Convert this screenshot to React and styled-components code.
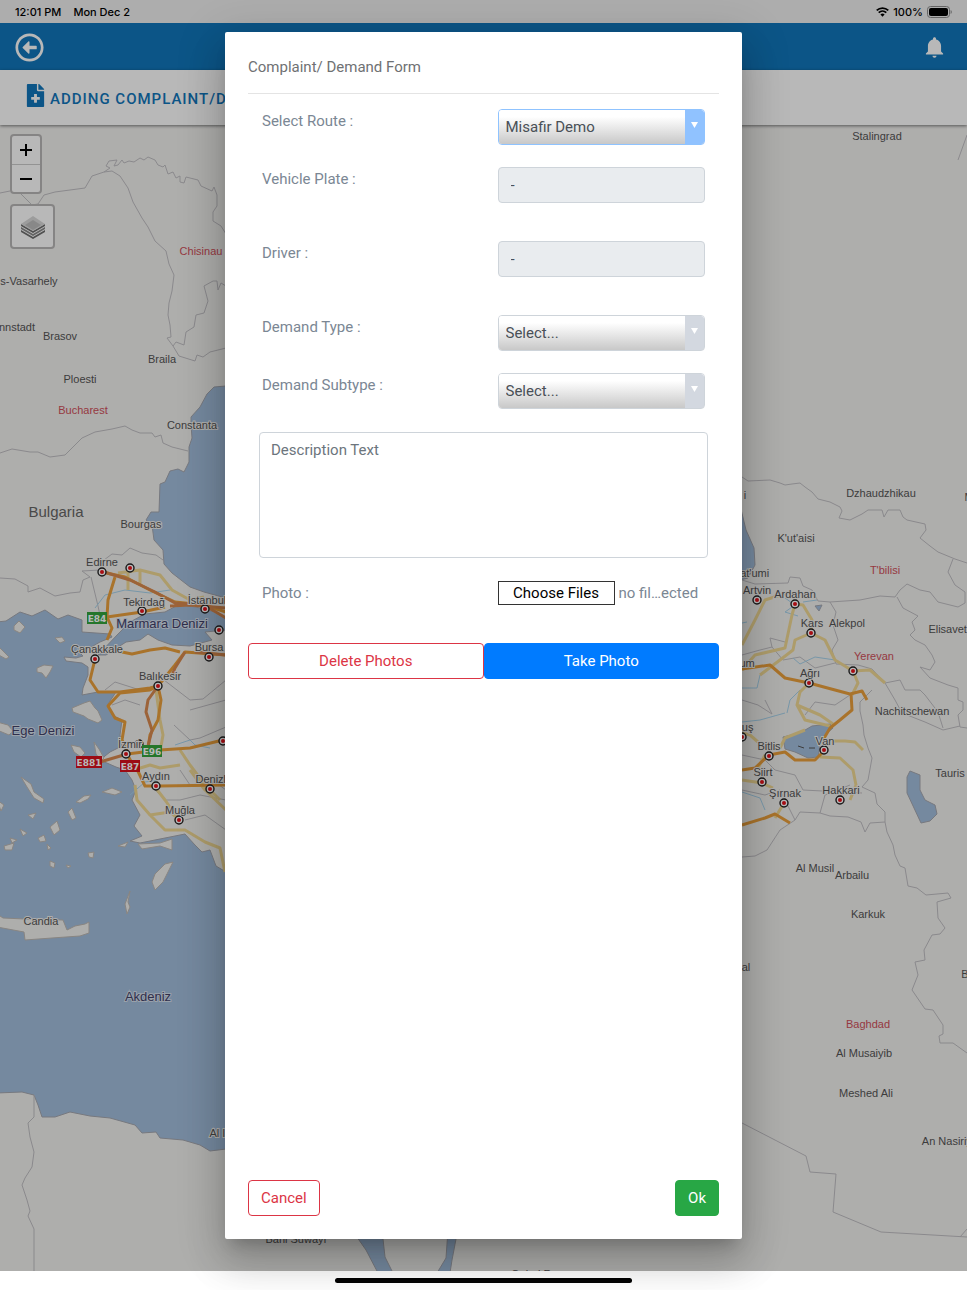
import React, { useState } from "react";
import styled, { createGlobalStyle } from "styled-components";
import { FaRegArrowAltCircleLeft, FaFileMedical } from "react-icons/fa";
import { IoMdNotifications } from "react-icons/io";

const GlobalStyle = createGlobalStyle`
  * {
    box-sizing: border-box;
  }
  body {
    margin: 0;
    background: #ffffff;
    font-family: Roboto, "Liberation Sans", sans-serif;
    font-size: 15px;
    line-height: 22px;
  }
  button, select, input, textarea {
    font: inherit;
  }
`;

const Screen = styled.div`
  min-height: 100vh;
  display: flex;
  flex-direction: column;
`;

const Viewport = styled.div`
  position: relative;
  flex: 1;
  display: flex;
  flex-direction: column;
`;

const StatusBar = styled.div`
  height: 23px;
  padding: 0 15px;
  display: flex;
  align-items: center;
  justify-content: space-between;
  background: #f0f0f0;
  color: #000000;
  font-family: Inter, sans-serif;
  font-size: 11px;
  font-weight: 500;
`;

const StatusGroup = styled.div`
  display: flex;
  align-items: center;
  gap: ${(props) => props.gap || "4px"};
`;

const Header = styled.header`
  height: 47px;
  padding: 2px 20px 0 15px;
  display: flex;
  align-items: center;
  justify-content: space-between;
  background: #1176bb;
`;

const IconButton = styled.button`
  display: flex;
  padding: 0;
  border: 0;
  background: none;
  color: #ffffff;
  font-size: ${(props) => props.size};
`;

const TitleBar = styled.div`
  position: relative;
  height: 55px;
  padding: 14px 24px;
  display: flex;
  gap: 3px;
  background: #ffffff;
  color: #1176bb;
  box-shadow: 0 1px 3px rgba(0, 0, 0, 0.5);
  font-size: 23px;
  z-index: 1;
`;

const Title = styled.h1`
  margin: 4px 0 0;
  font-size: 15px;
  font-weight: 500;
  line-height: 22px;
  letter-spacing: 1px;
  white-space: nowrap;
`;

const MapArea = styled.div`
  position: relative;
  flex: 1;
  overflow: hidden;
  background: #f2f1ef;
`;

const MapCanvas = styled.svg`
  position: absolute;
  inset: 0;
  width: 100%;
  height: 100%;
  font-family: "Liberation Sans", Arial, sans-serif;
`;

const MapControls = styled.div`
  position: absolute;
  top: 9px;
  left: 10px;
  display: flex;
  flex-direction: column;
  align-items: flex-start;
  gap: 10px;
`;

const ControlGroup = styled.div`
  display: flex;
  flex-direction: column;
  border: 2px solid #b9b8b7;
  border-radius: 4px;
  background: #ffffff;
`;

const ControlButton = styled.button`
  width: ${(props) => props.size}px;
  height: ${(props) => props.size}px;
  padding: 0;
  display: flex;
  align-items: center;
  justify-content: center;
  border: 0;
  background: none;
  color: #000000;

  & + & {
    border-top: 1px solid #cccccc;
  }
`;

const Backdrop = styled.div`
  position: absolute;
  inset: 0;
  z-index: 2;
  display: flex;
  justify-content: center;
  padding: 32px 0;
  background: rgba(0, 0, 0, 0.28);
`;

const Dialog = styled.form`
  width: 100%;
  max-width: 517px;
  padding: 23px;
  display: flex;
  flex-direction: column;
  border-radius: 2px;
  background: #ffffff;
  box-shadow: 0 11px 15px -7px rgba(0, 0, 0, 0.2),
    0 24px 38px 3px rgba(0, 0, 0, 0.14), 0 9px 46px 8px rgba(0, 0, 0, 0.12);
`;

const DialogTitle = styled.h2`
  margin: 0 0 15px;
  padding: 1px 0 15px;
  border-bottom: 1px solid #e4e4e4;
  color: #6f7173;
  font-size: 15px;
  font-weight: 400;
`;

const Row = styled.div`
  display: grid;
  grid-template-columns: 1fr 1fr;
  gap: 28px;
  padding: 0 14px;
  margin-bottom: ${(props) => (props.wide ? "38px" : "22px")};
`;

const Label = styled.label`
  padding-top: 1px;
  color: #7b8794;
`;

const SelectBox = styled.div`
  position: relative;
  height: 36px;
  overflow: hidden;
  border: 1px solid ${(props) => (props.active ? "#8fc3ff" : "#ced4da")};
  border-radius: 4px;
`;

const Select = styled.select`
  appearance: none;
  width: 100%;
  height: 34px;
  padding: 0 26px 0 7px;
  border: 0;
  outline: 0;
  background: linear-gradient(#ffffff 20%, #c8c8c8);
  color: #495057;
`;

const Arrow = styled.span`
  position: absolute;
  top: 0;
  right: 0;
  width: 19px;
  height: 34px;
  display: flex;
  justify-content: center;
  padding-top: 12px;
  background: ${(props) => (props.active ? "#90c2ff" : "#d3d8e0")};
  pointer-events: none;
`;

const ReadOnlyInput = styled.input`
  width: 100%;
  height: 36px;
  padding: 0 12px;
  border: 1px solid #ced4da;
  border-radius: 4px;
  background: #e9ecef;
  color: #495057;
`;

const Description = styled.textarea`
  display: block;
  height: 126px;
  margin: 1px 11px 23px;
  padding: 6px 11px;
  border: 1px solid #ced4da;
  border-radius: 4px;
  resize: none;

  &::placeholder {
    color: #6c757d;
    opacity: 1;
  }
`;

const FileField = styled.div`
  display: flex;
  align-items: center;
  gap: 4px;
  color: #7b8794;
  white-space: nowrap;
`;

const HiddenFile = styled.input`
  position: absolute;
  width: 1px;
  height: 1px;
  opacity: 0;
`;

const FileButton = styled.label`
  width: 117px;
  height: 24px;
  border: 1px solid #333333;
  color: #000000;
  text-align: center;
`;

const ButtonRow = styled.div`
  display: flex;
`;

const Button = styled.button`
  flex: ${(props) => (props.fill ? "1" : "none")};
  height: 36px;
  padding: 0 12px;
  border: 1px solid ${(props) => props.tone};
  border-radius: 4px;
  background: ${(props) => (props.outline ? "#ffffff" : props.tone)};
  color: ${(props) => (props.outline ? props.tone : "#ffffff")};
`;

const Footer = styled.div`
  margin-top: auto;
  display: flex;
  justify-content: space-between;
`;

const HomeBar = styled.div`
  height: 19px;
  display: flex;
  align-items: center;
  justify-content: center;
  background: #ffffff;

  &::after {
    content: "";
    width: 297px;
    height: 5px;
    border-radius: 3px;
    background: #000000;
  }
`;

const water = [
  // Black Sea
  "M226 386L214 387 207 394 200 407 191 417 191 425 192 438 189 447 189 462 184 472 178 469 170 471 165 482 160 484 159 512 151 512 146 520 152 525 154 540 163 550 164 564 172 573 190 587 204 592 226 598Z",
  "M740 505L746 530 754 548 755 565 748 578 740 580Z",
  // Marmara
  "M118 634L130 622 145 614 165 612 180 604 200 608 215 612 226 619 226 630 205 632 212 640 190 646 172 645 158 640 148 634 140 640 126 642 106 655 98 655Z",
  // Aegean and Mediterranean
  "M-3 622L6 621 20 612 32 616 45 610 58 619 68 615 82 620 82 632 110 634 112 637 100 642 86 650 79 652 83 656 76 658 64 657 66 661 82 663 88 667 88 675 83 688 82 695 98 692 116 692 108 704 112 715 122 720 120 735 122 746 110 752 100 760 116 767 125 770 132 780 136 790 132 800 140 815 134 826 142 836 130 841 140 843 165 838 185 834 195 845 202 852 210 850 216 866 226 872 226 1149 210 1151 200 1145 183 1140 160 1138 156 1132 142 1133 135 1125 110 1118 90 1116 70 1112 55 1117 42 1117 38 1105 34 1095 22 1092 -3 1093Z",
  // Lakes and gulfs
  "M783 737L800 733 812 726 830 724 833 728 825 735 820 745 818 757 808 758 795 752 785 749Z",
  "M907 777L910 771 920 775 920 790 925 800 935 805 937 814 930 821 921 823 907 793Z",
  "M815 606L822 605 819 611Z",
  "M352 1230L383 1239 385 1257 393 1273 378 1273 366 1250Z",
  "M448 1230L456 1239 452 1260 450 1273 437 1273 446 1258Z",
];

const islands = [
  "M-3 914L3 918 25 919 63 920 67 930 75 926 85 924 89 922 89 933 80 936 52 938 25 940 24 932 -3 927Z",
  "M173 862L165 864 155 874 152 882 155 890 163 882Z",
  "M130 891L125 904 127 914 130 907 128 902Z",
  "M14 626L19 621 25 627 20 633 14 630Z",
  "M55 638L62 637 65 641 60 643Z",
  "M37 668L44 665 53 666 50 672 46 678 42 673 37 672Z",
  "M72 708L84 703 90 701 95 708 98 711 102 720 98 723 88 719 84 716 73 712Z",
  "M94 742L99 749 104 758 101 761 96 754Z",
  "M71 745L80 747 85 753 81 757 74 752Z",
  "M-3 645L9 657 6 659 -3 654Z",
  "M-3 722L8 725 13 731 9 735 -3 730Z",
  "M21 777L31 784 34 792 44 799 43 803 34 798 27 787Z",
  "M76 802L84 796 91 795 88 799 80 803Z",
  "M102 792L112 788 122 792 115 795Z",
  "M68 812L72 808 76 818 72 820Z",
  "M50 827L57 821 60 830 54 835Z",
  "M28 815L36 813 33 819Z",
  "M20 829L27 833 23 836Z",
  "M4 846L14 843 12 850 5 850Z",
  "M38 838L44 835 46 841 40 842Z",
  "M118 846L128 842 125 847Z",
  "M138 844L160 843 172 839 172 850 160 846 142 849Z",
  "M88 853L94 852 93 858 89 857Z",
  "M50 861L55 863 54 868 50 866Z",
  "M66 865L71 866 68 868Z",
  "M47 844L51 848 48 850Z",
  "M10 838L17 840 12 843Z",
  "M-3 800L4 805 1 811Z",
];

const borders = [
  "M0 193L10 191M20 193L27 200 32 205 38 204 44 195 55 192 85 188 92 176 104 172 112 171 120 176 128 188 133 202 142 218 148 227 155 241 166 251 169 264 174 275 172 291 169 303 168 315 170 325 171 337 167 338 173 346 176 342 184 345 186 332 194 327 196 315 204 313 208 301 204 286 213 281 217 281 218 290 221 283 226 286",
  "M104 172L110 168 106 166 109 161 117 160 114 166 118 165 122 160 124 163 129 161 134 162 140 158 144 160 148 157 155 160 158 165 163 167 165 165 168 174 173 172 176 178 180 176 180 182 184 183 186 177 198 180 201 186 212 191 214 187 217 195 217 206 213 212 213 221 221 226 226 234",
  "M173 346L179 356 195 361 197 355 203 357 210 352 226 348",
  "M0 453L12 449 30 452 38 452 50 457 65 455 82 438 95 432 112 429 125 426 132 430 140 433 152 433 155 437 161 435 163 443 172 447 188 451",
  "M0 578L15 579 28 586 28 592 40 588 55 596 70 593 80 592 83 580 90 577 82 571 100 570M91 577L98 606 101 620M104 560L112 554 122 555 130 548 142 553 156 555 163 560",
  "M105 690L115 682 140 690M164 680L190 700 203 699 226 680M174 725L190 740 200 738 226 727M190 710L226 700M112 705L125 700 140 705M150 785L165 800 180 800 200 795 226 800M180 770L190 785 215 782 226 790M185 820L205 815 226 830",
  "M742 477L748 481 770 480 780 483 785 485 792 484 800 483 805 487 812 492 818 499 830 502 840 507 842 511 839 518 850 520 862 514 868 510 882 510 884 517 888 510 900 510 903 517 907 520 925 524 926 530 920 538 930 546 938 552 955 559 967 563",
  "M953 559L948 572 955 585 965 592 965 603 958 607 938 602 930 592 920 590 907 584 900 590 895 597 880 596 860 600 830 602 818 601 812 590 803 586 800 578 790 577 788 583 755 584 742 580",
  "M897 597L903 608 918 616 912 622 915 630 910 635 915 640 925 645 932 655 935 662 930 670 920 667 930 678 948 685 958 688 958 700 963 702 963 710 958 715 960 727 967 728",
  "M830 602L836 612 833 625 838 640 832 650 836 664 858 665 872 669 885 683 895 700 902 713 925 722 943 730 960 726M885 683L900 680 905 690 920 690 925 695 938 712 943 728",
  "M872 690L860 702 860 711 863 725 864 735 868 748 872 758 868 780 862 787 875 793 877 804 885 812 885 822 870 823 865 832 861 822 848 817 830 816 820 813 800 812 795 820 780 830 767 850 755 856 742 857",
  "M885 822L887 832 893 845 895 855 900 866 905 868 908 886 917 888 926 895 948 893 951 898 937 902 938 918 945 928 940 934 932 935 924 950 925 960 915 962 918 975 912 990 925 1009 933 1010 943 1025 943 1034 939 1036 940 1043 953 1043 967 1053",
  "M742 655L760 650 772 647 770 638 785 642M772 647L783 660 800 657 815 668 835 663M742 700L758 705 772 714 765 700M805 715L815 702 835 705 850 695M742 755L765 760 775 770 795 775 803 790 862 793M820 813L825 795 850 785M742 790L765 795 780 790 795 820",
  "M34 1095L34 1117 28 1123 30 1137 34 1152 32 1167 25 1178 22 1185 27 1200 30 1211 28 1216 34 1229 34 1273",
  "M742 1123L806 1156 810 1172 836 1174 833 1212 881 1232 967 1237M960 1237L967 1229",
  "M967 135L958 160",
];

const streams = [
  "M95 608L105 595 125 590 150 593 170 590",
  "M130 795L145 782 160 780M175 745L190 740 195 745 210 748",
  "M742 623L747 622M785 598L795 605 785 612 798 616M803 602L817 600M793 658L800 664 815 657 835 660",
  "M742 688L757 688 760 675M787 713L790 700 800 690M742 722L760 720 785 713M742 792L760 798 765 810",
];

const minorRoads = [
  "M118 573L140 570 160 575 172 590 190 600 204 597M128 570L128 590M140 571L140 585",
  "M134 770L150 765 160 768 180 765M180 750L190 765 205 785 220 800M156 690L160 720 163 735 160 752",
  "M135 785L137 800 150 815 170 812 180 820M150 815L165 830 185 830 205 842 220 848 225 872M155 787L165 800 179 820M190 770L205 790 226 810",
  "M742 645L755 620 765 600 790 592M742 670L755 655 785 648 792 615 795 604 803 605 812 620 811 633 825 640 835 660 853 671 870 670 885 683",
  "M760 675L780 660 793 650 795 640 811 633M853 671L858 683 852 695M809 683L800 692 797 705 805 720 830 726M797 705L820 715 833 724M780 748L785 738 805 730",
  "M833 741L845 741 855 742 863 750M820 757L840 758 853 770 856 785 850 800M742 733L750 735 758 742M742 780L762 783 773 788M784 803L775 818M765 755L758 768",
];

const mainRoads = [
  "M102 572L125 577 150 590 175 602 204 605 226 612M115 577L108 600 107 617 112 628 107 640M107 617L142 612 165 607",
  "M95 659L90 680 98 692 120 692 150 688 158 686 175 665 185 652 226 655M122 652L132 654 150 650 165 648 180 652",
  "M158 686L150 690 120 693 108 706 115 718 125 722 122 740 127 750M158 686L161 700 158 720 150 735 148 748",
  "M127 754L160 750 190 748 223 740M135 765L145 786 160 786 226 785M127 754L133 765",
  "M742 669L770 665 785 678 809 683 835 690 850 694 862 691 867 700M851 693L852 710 840 720 830 728 823 740",
  "M742 770L755 768 769 755 785 752 795 760 815 760 822 753M742 825L765 818 775 814 790 823",
];

const motorways = [
  "M104 572L130 580 155 592 175 603 204 605 226 618M170 606L190 605 226 608M100 762L127 754M158 686L148 700 146 712 152 730 148 746M185 652L175 668 170 680M195 652L226 655",
];

const pins = [
  [102, 572], [130, 568], [142, 611], [205, 609], [219, 630], [95, 659],
  [209, 657], [158, 686], [126, 754], [139, 744], [156, 786], [210, 789],
  [223, 741], [179, 820], [757, 600], [795, 604], [811, 633], [853, 671],
  [809, 683], [742, 737], [769, 756], [824, 750], [762, 782], [784, 803],
  [840, 800],
];

const cities = [
  ["Stalingrad", 877, 140], ["s-Vasarhely", 29, 285], ["nnstadt", 17, 331],
  ["Brasov", 60, 340], ["Braila", 162, 363], ["Ploesti", 80, 383],
  ["Constanta", 192, 429], ["Bourgas", 141, 528], ["Edirne", 102, 566],
  ["Tekirdağ", 144, 606], ["İstanbul", 207, 604], ["Çanakkale", 97, 653],
  ["Bursa", 209, 651], ["Balıkesir", 160, 680], ["İzmir", 130, 748],
  ["Aydın", 156, 780], ["Denizli", 212, 783], ["Muğla", 180, 814],
  ["Candia", 41, 925], ["Al Iskandariyah", 247, 1137], ["Bani Suwayf", 296, 1243],
  ["Gebel Rus", 537, 1278], ["Dzhaudzhikau", 881, 497], ["K'ut'aisi", 796, 542],
  ["Bat'umi", 751, 577], ["Artvin", 757, 594], ["Ardahan", 795, 598],
  ["Kars", 812, 627], ["Alekpol", 847, 627], ["Elisavetpol", 955, 633],
  ["Erzurum", 734, 667], ["Ağrı", 810, 677], ["Nachitschewan", 912, 715],
  ["Muş", 743, 731], ["Van", 825, 745], ["Bitlis", 769, 750],
  ["Siirt", 763, 776], ["Tauris", 950, 777], ["Şırnak", 785, 797],
  ["Hakkari", 841, 794], ["Al Musil", 815, 872], ["Arbailu", 852, 879],
  ["Karkuk", 868, 918], ["al", 746, 971], ["i", 745, 499], ["Al Musaiyib", 864, 1057],
  ["Meshed Ali", 866, 1097], ["An Nasiriyah", 953, 1145], ["B", 965, 978], ["M", 969, 501],
];

const capitals = [
  ["Chisinau", 201, 255], ["Bucharest", 83, 414], ["T'bilisi", 885, 574],
  ["Yerevan", 874, 660], ["Baghdad", 868, 1028],
];

const seas = [
  ["Marmara Denizi", 162, 628], ["Ege Denizi", 43, 735], ["Akdeniz", 148, 1001],
];

const roadSigns = [
  ["E84", 97, 618, "#34a43c"], ["E96", 152, 751, "#34a43c"],
  ["E881", 89, 762, "#d8101c"], ["E87", 130, 766, "#d8101c"],
];

function Lines({ paths, color, width }) {
  return (
    <g fill="none" stroke={color} strokeWidth={width} strokeLinejoin="round">
      {paths.map((d) => <path key={d} d={d} />)}
    </g>
  );
}

function Labels({ items, color, size, halo = "#f2f1ef" }) {
  return (
    <g fill={color} stroke={halo} strokeWidth="2" paintOrder="stroke" fontSize={size} textAnchor="middle">
      {items.map(([name, x, y]) => <text key={name} x={x} y={y}>{name}</text>)}
    </g>
  );
}

function RegionMap() {
  return (
    <MapCanvas viewBox="0 125 967 1146" preserveAspectRatio="xMinYMin slice" role="img" aria-label="Map">
      <g fill="#a3bedd" stroke="#a5a8b0" strokeWidth="1">
        {water.map((d) => <path key={d} d={d} />)}
      </g>
      <g fill="#f2f1ef" stroke="#bdb9b4" strokeWidth="1">
        {islands.map((d) => <path key={d} d={d} />)}
      </g>
      <Lines paths={borders} color="#c0bfc3" width="1" />
      <Lines paths={streams} color="#a6d2ea" width="1" />
      <Lines paths={minorRoads} color="#f0d894" width="3" />
      <Lines paths={mainRoads} color="#eba03c" width="3" />
      <Lines paths={motorways} color="#d98a50" width="3" />
      <path d="M798 746l6 2M809 748h6" stroke="#555555" />
      {pins.map(([x, y]) => (
        <g key={`${x}-${y}`}>
          <circle cx={x} cy={y} r="4" fill="#ffffff" stroke="#222222" strokeWidth="1.4" />
          <circle cx={x} cy={y} r="2" fill="#e8141c" />
        </g>
      ))}
      <Labels items={cities} color="#555555" size="11" />
      <Labels items={capitals} color="#d0505a" size="11" />
      <Labels items={seas} color="#42426a" size="13" halo="#d5dfec" />
      <Labels items={[["Bulgaria", 56, 517]]} color="#666666" size="15" />
      {roadSigns.map(([name, x, y, color]) => (
        <g key={name}>
          <rect x={x - name.length * 3 - 1} y={y - 6} width={name.length * 6 + 2} height="12" fill={color} />
          <text x={x} y={y + 4} fill="#ffffff" fontSize="9" fontWeight="700" fontFamily="DejaVu Sans, sans-serif" textAnchor="middle">
            {name}
          </text>
        </g>
      ))}
    </MapCanvas>
  );
}

function LayersIcon() {
  return (
    <svg width="26" height="26" viewBox="0 0 26 26">
      <path d="M1 16l12 7 12-7v2l-12 7-12-7z" fill="#6f6f6f" />
      <path d="M1 13l12 7 12-7v2l-12 7-12-7z" fill="#898989" />
      <path d="M1 10l12 7 12-7v2l-12 7-12-7z" fill="#6f6f6f" />
      <path d="M13 2l12 8-12 7L1 10z" fill="#d9d9d9" />
      <path d="M13 6l8 5-8 5-8-5z" fill="#bdbdbd" />
    </svg>
  );
}

function WifiIcon() {
  return (
    <svg width="13" height="10" viewBox="0 0 13 10" fill="none" stroke="#000000" strokeWidth="1.7">
      <path d="M0.7 3.4a8.4 8.4 0 0 1 11.6 0" />
      <path d="M2.7 5.7a5.5 5.5 0 0 1 7.6 0" />
      <path d="M6.5 9.8L4.4 7.6a3 3 0 0 1 4.2 0z" fill="#000000" stroke="none" />
    </svg>
  );
}

function BatteryIcon() {
  return (
    <svg width="25" height="12" viewBox="0 0 25 12">
      <rect x="0.5" y="0.5" width="22" height="11" rx="3" fill="none" stroke="#8c8c8c" />
      <rect x="2" y="2" width="19" height="8" rx="2" fill="#000000" />
      <path d="M23.6 4v4q1.2-.6 1.2-2t-1.2-2z" fill="#8c8c8c" />
    </svg>
  );
}

function SelectField({ id, label, options, active, wide }) {
  const [value, setValue] = useState(options[0]);

  return (
    <Row wide={wide}>
      <Label htmlFor={id}>{label}</Label>
      <SelectBox active={active}>
        <Select id={id} value={value} onChange={(e) => setValue(e.target.value)}>
          {options.map((option) => <option key={option}>{option}</option>)}
        </Select>
        <Arrow active={active}>
          <svg width="7" height="6" viewBox="0 0 7 6"><path d="M0 0h7L3.5 6z" fill="#ffffff" /></svg>
        </Arrow>
      </SelectBox>
    </Row>
  );
}

function ReadOnlyField({ id, label }) {
  return (
    <Row wide>
      <Label htmlFor={id}>{label}</Label>
      <ReadOnlyInput id={id} value="-" readOnly />
    </Row>
  );
}

function ComplaintForm() {
  return (
    <Dialog role="dialog" aria-labelledby="form-title" onSubmit={(e) => e.preventDefault()}>
      <DialogTitle id="form-title">Complaint/ Demand Form</DialogTitle>
      <SelectField id="route" label="Select Route :" options={["Misafir Demo"]} active />
      <ReadOnlyField id="plate" label="Vehicle Plate :" />
      <ReadOnlyField id="driver" label="Driver :" />
      <SelectField id="type" label="Demand Type :" options={["Select..."]} />
      <SelectField id="subtype" label="Demand Subtype :" options={["Select..."]} />
      <Description aria-label="Description Text" placeholder="Description Text" />
      <Row wide>
        <Label htmlFor="photo">Photo :</Label>
        <FileField>
          <HiddenFile id="photo" type="file" multiple />
          <FileButton htmlFor="photo">Choose Files</FileButton>
          <span>no fil…ected</span>
        </FileField>
      </Row>
      <ButtonRow>
        <Button type="button" tone="#dc3545" outline fill>Delete Photos</Button>
        <Button type="button" tone="#007bff" fill>Take Photo</Button>
      </ButtonRow>
      <Footer>
        <Button type="button" tone="#dc3545" outline>Cancel</Button>
        <Button type="submit" tone="#28a745">Ok</Button>
      </Footer>
    </Dialog>
  );
}

export default function App() {
  return (
    <Screen>
      <GlobalStyle />
      <Viewport>
        <StatusBar>
          <StatusGroup gap="12px">
            <span>12:01 PM</span>
            <span>Mon Dec 2</span>
          </StatusGroup>
          <StatusGroup>
            <WifiIcon />
            <span>100%</span>
            <BatteryIcon />
          </StatusGroup>
        </StatusBar>
        <Header>
          <IconButton size="29px" aria-label="Back"><FaRegArrowAltCircleLeft /></IconButton>
          <IconButton size="25px" aria-label="Notifications"><IoMdNotifications /></IconButton>
        </Header>
        <TitleBar>
          <FaFileMedical />
          <Title>ADDING COMPLAINT/DEMAND</Title>
        </TitleBar>
        <MapArea>
          <RegionMap />
          <MapControls>
            <ControlGroup>
              <ControlButton size={28} aria-label="Zoom in">
                <svg width="12" height="12"><path d="M6 0v12M0 6h12" stroke="#000000" strokeWidth="2" /></svg>
              </ControlButton>
              <ControlButton size={28} aria-label="Zoom out">
                <svg width="12" height="12"><path d="M0 6h12" stroke="#000000" strokeWidth="2" /></svg>
              </ControlButton>
            </ControlGroup>
            <ControlGroup>
              <ControlButton size={41} aria-label="Layers"><LayersIcon /></ControlButton>
            </ControlGroup>
          </MapControls>
        </MapArea>
        <Backdrop>
          <ComplaintForm />
        </Backdrop>
      </Viewport>
      <HomeBar />
    </Screen>
  );
}
